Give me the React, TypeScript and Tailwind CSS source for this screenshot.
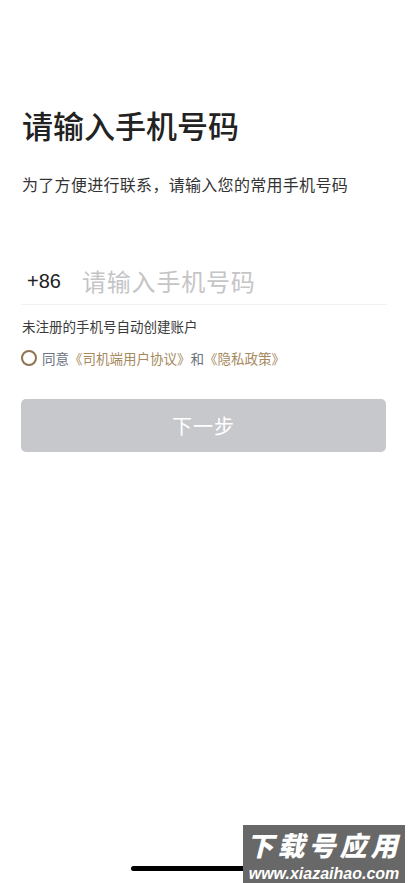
import { useState } from "react";

function App() {
  const [phone, setPhone] = useState("");
  const [agree, setAgree] = useState(false);

  return (
    <div className="relative w-[408px] h-[883px] bg-white overflow-hidden font-['Noto_Sans_CJK_SC',sans-serif]">
      <div className="px-[21px] pt-[106px]">
        <h1 className="pl-[1px] text-[31px] leading-[38px] font-medium text-[#222]">请输入手机号码</h1>
        <p className="mt-[29px] pl-[1px] text-[16px] leading-[22px] text-[#333] tracking-[0.3px]">
          为了方便进行联系，请输入您的常用手机号码
        </p>

        <div className="mt-[62px] flex items-center h-[48px] border-b border-[#f0f0f0]">
          <span className="pl-[6px] w-[61px] text-[20px] text-[#222] font-['Liberation_Sans',sans-serif]">+86</span>
          <input
            className="flex-1 min-w-0 text-[24px] text-[#222] placeholder:text-[#c5c5c7] outline-none bg-transparent tracking-[0.8px]"
            placeholder="请输入手机号码"
            value={phone}
            onChange={e => setPhone(e.target.value)}
          />
        </div>

        <p className="mt-[12px] pl-[1px] text-[13.5px] leading-[18px] text-[#3a3a3a]">未注册的手机号自动创建账户</p>

        <div className="mt-[13px] flex items-center h-[20px] text-[13.5px]">
          <button
            className="w-[16px] h-[16px] rounded-full border-2 border-[#8f7450] mr-[5px]"
            onClick={() => setAgree(!agree)}
          />
          <span className="text-[#6a7180]">同意</span>
          <span className="text-[#a68a5e]">《司机端用户协议》</span>
          <span className="text-[#6a7180]">和</span>
          <span className="text-[#a68a5e]">《隐私政策》</span>
        </div>

        <button
          className={`mt-[31px] w-[365px] h-[53px] rounded-[5px] text-[20px] text-white tracking-[1px] ${agree && phone ? "bg-[#a68a5e]" : "bg-[#c7c8cb]"}`}
        >
          下一步
        </button>
      </div>

      {/* home indicator */}
      <div className="absolute left-[131px] top-[866px] w-[146px] h-[5px] rounded-full bg-black" />

      {/* watermark */}
      <div className="absolute left-[243px] top-[825px] w-[162px] h-[58px] bg-[#686868] flex flex-col items-center">
        <span className="text-[27px] leading-[39px] font-black italic text-white tracking-[4px]">下载号应用</span>
        <span className="text-[16px] leading-[19px] font-bold italic text-white font-['Liberation_Sans',sans-serif]">www.xiazaihao.com</span>
      </div>
    </div>
  );
}

export default App;
